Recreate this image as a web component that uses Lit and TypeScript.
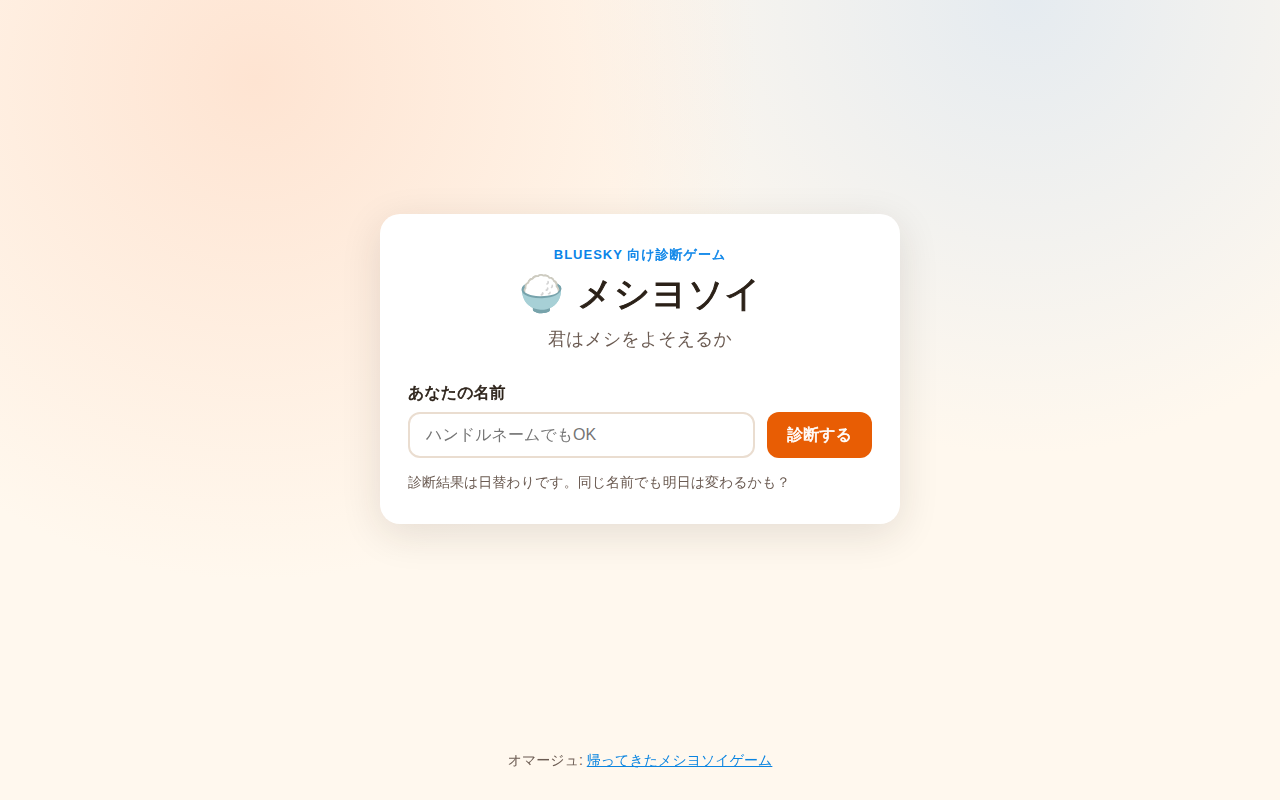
import { LitElement, html, css } from "lit";
import { customElement } from "lit/decorators.js";

@customElement("app-root")
export class AppRoot extends LitElement {
  static styles = css`
    * { box-sizing: border-box; }
    :host {
      box-sizing: border-box;
      display: flex;
      flex-direction: column;
      min-height: 100vh;
      font-family: "Liberation Sans", "WenQuanYi Zen Hei", "Noto Sans CJK JP", sans-serif;
      font-size: 16px;
      line-height: 24px;
      color: #2b2118;
      background:
        radial-gradient(circle at 20% 10%, #fee4d2 0%, transparent 40%),
        radial-gradient(circle at 80% 0%, #e5ebf0 0%, transparent 35%),
        #fff8ee;
    }
    main { flex: 1; display: grid; place-items: center; padding: 24px; }
    .card {
      width: 100%;
      max-width: 520px;
      padding: 32px 28px;
      border-radius: 20px;
      background: #fff;
      box-shadow: 0 10px 40px rgba(43, 33, 24, 0.12);
    }
    header { text-align: center; margin-bottom: 28px; }
    p, h1 { margin: 0; }
    .strong { font-weight: 700; -webkit-text-stroke: 0.04em; }
    .eyebrow { font-size: 13px; line-height: 18px; font-weight: 700; letter-spacing: 1px; color: #0a84e8; }
    h1 { display: flex; justify-content: center; gap: 13px; margin: 6px 0; font-size: 36px; line-height: 48px; -webkit-text-stroke: 1px; }
    .tagline { font-size: 18px; line-height: 30px; color: #6b5b52; }
    label { display: block; line-height: 22px; margin-bottom: 8px; }
    .row { display: flex; gap: 12px; }
    input, button { font: inherit; border-radius: 12px; }
    input { flex: 1; min-width: 0; padding: 9px 16px; border: 2px solid #eaddd0; background: #fff; color: inherit; }
    button { padding: 0 20px; border: 0; background: #e85d04; color: #fff; }
    .note { margin-top: 14px; font-size: 14px; line-height: 20px; color: #6b5b52; }
    footer { padding: 10px 24px 28px; text-align: center; font-size: 14px; color: #6b5b52; }
    a { color: #0a84e0; }
  `;

  render() {
    return html`
      <main>
        <section class="card">
          <header>
            <p class="eyebrow">BLUESKY <span class="strong">向け診断ゲーム</span></p>
            <h1><span>🍚</span><span>メシヨソイ</span></h1>
            <p class="tagline">君はメシをよそえるか</p>
          </header>
          <form>
            <label class="strong" for="name">あなたの名前</label>
            <div class="row">
              <input id="name" type="text" placeholder="ハンドルネームでもOK" />
              <button class="strong" type="button">診断する</button>
            </div>
            <p class="note">診断結果は日替わりです。同じ名前でも明日は変わるかも？</p>
          </form>
        </section>
      </main>
      <footer>オマージュ: <a href="#">帰ってきたメシヨソイゲーム</a></footer>
    `;
  }
}
